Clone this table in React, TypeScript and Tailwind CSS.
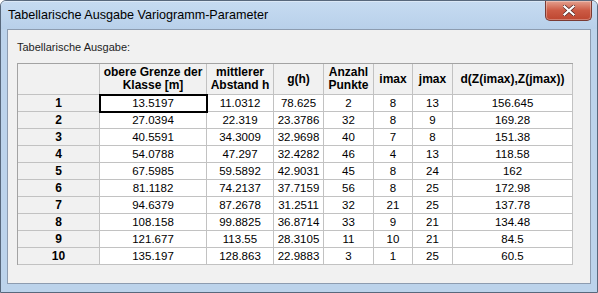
import React from "react"

const cols = [
  "obere Grenze der Klasse [m]",
  "mittlerer Abstand h",
  "g(h)",
  "Anzahl Punkte",
  "imax",
  "jmax",
  "d(Z(imax),Z(jmax))",
]

const headers: React.ReactNode[] = [
  <>obere Grenze der<br />Klasse [m]</>,
  <>mittlerer<br />Abstand h</>,
  "g(h)",
  <>Anzahl<br />Punkte</>,
  "imax",
  "jmax",
  "d(Z(imax),Z(jmax))",
]

const rows = [
  ["13.5197", "11.0312", "78.625", "2", "8", "13", "156.645"],
  ["27.0394", "22.319", "23.3786", "32", "8", "9", "169.28"],
  ["40.5591", "34.3009", "32.9698", "40", "7", "8", "151.38"],
  ["54.0788", "47.297", "32.4282", "46", "4", "13", "118.58"],
  ["67.5985", "59.5892", "42.9031", "45", "8", "24", "162"],
  ["81.1182", "74.2137", "37.7159", "56", "8", "25", "172.98"],
  ["94.6379", "87.2678", "31.2511", "32", "21", "25", "137.78"],
  ["108.158", "99.8825", "36.8714", "33", "9", "21", "134.48"],
  ["121.677", "113.55", "28.3105", "11", "10", "21", "84.5"],
  ["135.197", "128.863", "22.9883", "3", "1", "25", "60.5"],
]

export default function App() {
  return (
    <div
      className="w-[598px] h-[293px] bg-[#bcd3eb] border border-[#58687c] rounded-t-[6px] flex flex-col text-black"
      style={{ fontFamily: '"Liberation Sans", Arial, sans-serif' }}
    >
      {/* title bar */}
      <div className="h-[28px] shrink-0 flex items-start justify-between rounded-t-[5px] border-t border-[#dbe8f6] bg-gradient-to-b from-[#c6dbf1] to-[#b8d0ea] pl-[7px] pr-[5px]">
        <span className="mt-[5px] text-[12.6px] leading-[16px]">Tabellarische Ausgabe Variogramm-Parameter</span>
        <button className="-mt-px w-[47px] h-[20px] rounded-b-[5px] border border-t-0 border-[#7a3a33] bg-gradient-to-b from-[#e3a08f] via-[#cc5a44] to-[#bd4630] flex items-center justify-center shadow-[inset_0_0_0_1px_rgba(255,255,255,0.3)]">
          <svg width="12" height="11" viewBox="0 0 12 11">
            <path d="M1.5 1.5 L10.5 9.5 M10.5 1.5 L1.5 9.5" stroke="#4a2020" strokeWidth="3.6" strokeLinecap="square" />
            <path d="M1.5 1.5 L10.5 9.5 M10.5 1.5 L1.5 9.5" stroke="#ffffff" strokeWidth="2.2" strokeLinecap="square" />
          </svg>
        </button>
      </div>

      {/* client area */}
      <div className="mx-[6px] h-[255px] border border-[#8d9cb0] bg-[#f1f1f1] pl-[9px] pt-[10px] text-[11.5px]">
        <div className="h-[14px] leading-[14px] mb-[9px] text-[11px] text-[#1e1e1e]">Tabellarische Ausgabe:</div>
        <div className="w-[556px] grid grid-cols-[82px_107px_67px_50px_50px_39px_40px_120px] border-l border-t border-[#a3a3a3]">
          <div className="h-[31px] border-r border-b border-[#c2c2c2] bg-[#f1f1f1]" />
          {headers.map((h, i) => (
            <div
              key={cols[i]}
              className="h-[31px] border-r border-b border-[#c2c2c2] bg-[#f1f1f1] flex items-center justify-center text-center font-bold leading-[13px] text-[12px]"
            >
              <span>{h}</span>
            </div>
          ))}
          {rows.map((r, ri) => (
            <React.Fragment key={ri}>
              <div className="h-[17px] border-r border-b border-[#c2c2c2] bg-[#f1f1f1] flex items-center justify-center font-bold text-[12px]">
                {ri + 1}
              </div>
              {r.map((v, ci) => (
                <div
                  key={ci}
                  className={
                    "h-[17px] border-r border-b border-[#c2c2c2] bg-white flex items-center justify-center leading-[17px]" +
                    (ri === 0 && ci === 0 ? " relative z-10 outline-2 outline-black -outline-offset-1" : "")
                  }
                >
                  {v}
                </div>
              ))}
            </React.Fragment>
          ))}
        </div>
      </div>
    </div>
  )
}
